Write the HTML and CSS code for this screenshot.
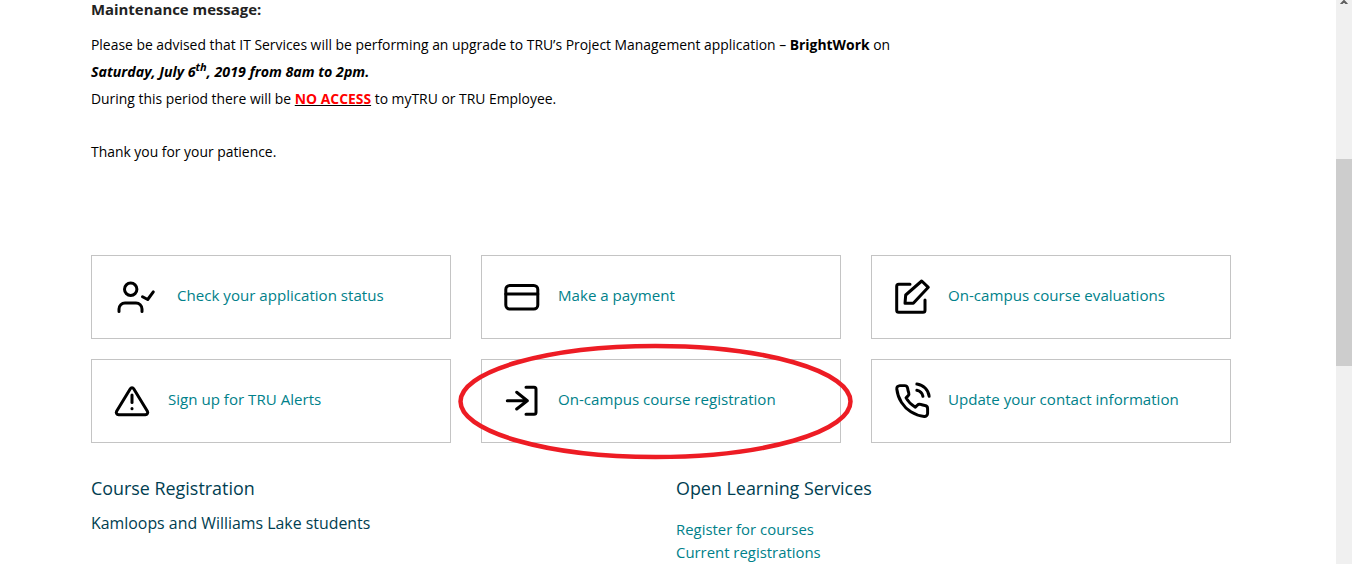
FILE: index.html
```html
<!DOCTYPE html>
<html lang="en">
<head>
    <meta charset="UTF-8">
    <title>Maintenance message</title>
    <link rel="stylesheet" href="styles.css">
</head>
<body>
    <main class="page">
        <section class="notice">
            <h2 class="notice-title">Maintenance message:</h2>
            <p>Please be advised that IT Services will be performing an upgrade to TRU’s Project Management application – <strong>BrightWork</strong> on</p>
            <p><strong><em class="notice-date">Saturday, July 6<sup>th</sup>, 2019 from 8am to 2pm.</em></strong></p>
            <p>During this period there will be <u class="no-access"><strong>NO ACCESS</strong></u> to myTRU or TRU Employee.</p>
            <p class="thanks">Thank you for your patience.</p>
        </section>

        <section class="cards">
            <a class="card" href="#">
                <svg class="icon icon-wide" viewBox="0 0 49 40">
                    <circle cx="17.7" cy="12.3" r="6.2"/>
                    <path d="M6 34.5v-2.5a6 6 0 0 1 6-6h11a6 6 0 0 1 6 6v2.5"/>
                    <path d="M29.5 19.7l5.2 2.8 5.6-7.6"/>
                </svg>
                <span class="card-label">Check your application status</span>
            </a>
            <a class="card" href="#">
                <svg class="icon" viewBox="0 0 40 40">
                    <rect x="2.8" y="8.5" width="32" height="23.5" rx="4"/>
                    <path d="M2.8 17h32"/>
                </svg>
                <span class="card-label">Make a payment</span>
            </a>
            <a class="card" href="#">
                <svg class="icon" viewBox="0 0 40 40">
                    <path d="M17 7.3H5.7a2 2 0 0 0-2 2v24a2 2 0 0 0 2 2H30a2 2 0 0 0 2-2V23"/>
                    <path d="M12 26.3l.7-8.3L28.7 4l6.6 6.3-15 16z"/>
                </svg>
                <span class="card-label">On-campus course evaluations</span>
            </a>
            <a class="card" href="#">
                <svg class="icon" viewBox="0 0 40 40">
                    <path d="M17.3 7.8L3.6 30.2a2.4 2.4 0 0 0 2 3.6h26.8a2.4 2.4 0 0 0 2-3.6L20.7 7.8a2 2 0 0 0-3.4 0z"/>
                    <path d="M19 14v7.5"/>
                    <path d="M19 27.5v.2"/>
                </svg>
                <span class="card-label">Sign up for TRU Alerts</span>
            </a>
            <a class="card" href="#">
                <svg class="icon" viewBox="0 0 40 40">
                    <path d="M4.3 19.7h20M13.7 11.3l10.6 8.4L13.7 28"/>
                    <path d="M23 6.3h8a2 2 0 0 1 2 2v23a2 2 0 0 1-2 2h-8"/>
                </svg>
                <span class="card-label">On-campus course registration</span>
            </a>
            <a class="card" href="#">
                <svg class="icon" viewBox="0 0 40 40">
                    <g transform="translate(.5 1.5) scale(1.55)" stroke-width="1.9">
                        <path d="M15.05 5A5 5 0 0 1 19 8.95M15.05 1A9 9 0 0 1 23 8.94m-1 7.98v3a2 2 0 0 1-2.18 2 19.79 19.79 0 0 1-8.63-3.07 19.5 19.5 0 0 1-6-6 19.79 19.79 0 0 1-3.07-8.67A2 2 0 0 1 4.11 2h3a2 2 0 0 1 2 1.72 12.84 12.84 0 0 0 .7 2.81 2 2 0 0 1-.45 2.11L8.09 9.91a16 16 0 0 0 6 6l1.27-1.27a2 2 0 0 1 2.11-.45 12.84 12.84 0 0 0 2.81.7A2 2 0 0 1 22 16.92z"/>
                    </g>
                </svg>
                <span class="card-label">Update your contact information</span>
            </a>
        </section>

        <section class="services">
            <div>
                <h3>Course Registration</h3>
                <h4>Kamloops and Williams Lake students</h4>
            </div>
            <div>
                <h3>Open Learning Services</h3>
                <ul class="links">
                    <li><a href="#">Register for courses</a></li>
                    <li><a href="#">Current registrations</a></li>
                </ul>
            </div>
        </section>

        <!-- hand drawn circle over the registration card -->
        <svg class="scribble" viewBox="0 0 400 120">
            <ellipse cx="198.5" cy="59.5" rx="195" ry="55.5"/>
        </svg>
    </main>

    <div class="scrollbar">
        <svg class="scroll-arrow" viewBox="0 0 8 4"><path d="M.8 4.5L4 1l3.2 3.5"/></svg>
        <div class="scroll-thumb"></div>
    </div>
</body>
</html>
```

FILE: styles.css
```css
* { box-sizing: border-box; margin: 0; padding: 0; }
html, body { height: 100%; overflow: hidden; }
body { display: flex; background: #fff; color: #000; font-family: "Open Sans", "Noto Sans", sans-serif; font-size: 13.9px; }

.page { position: relative; flex: 1; padding-left: 91px; padding-right: 105px; }

/* notice */
.notice { height: 255px; }
.notice-title { font-size: 14.9px; font-weight: 700; line-height: 18px; color: #222; margin-bottom: 13px; }
.notice p { line-height: 27px; white-space: nowrap; }
.notice strong { font-weight: 700; }
.notice-date { font-size: 14.2px; }
.notice sup { font-size: 11px; line-height: 0; }
.no-access { color: #f00; text-decoration-color: #000; }
.thanks { margin-top: 26px; }

/* link cards */
.cards { display: grid; grid-template-columns: repeat(3, 360px); grid-auto-rows: 84px; gap: 20px 30px; }
.card { display: flex; align-items: center; gap: 15px; padding-left: 21px; border: 1px solid #c4c4c4; color: #00818a; font-size: 15.1px; text-decoration: none; }
.card-label { margin-bottom: 4px; }
.icon { width: 40px; height: 40px; flex: none; fill: none; stroke: #000; stroke-width: 3; stroke-linecap: round; stroke-linejoin: round; }
.icon-wide { width: 49px; }

/* bottom columns */
.services { display: grid; grid-template-columns: 585px 1fr; margin-top: 32px; }
.services h3 { font-size: 17.9px; font-weight: 400; line-height: 26px; color: #003e51; }
.services h4 { font-size: 15.9px; font-weight: 400; line-height: 24px; color: #003e51; margin-top: 10px; }
.links { list-style: none; margin-top: 17px; }
.links li { line-height: 23px; font-size: 14.9px; }
.links a { color: #00818a; text-decoration: none; }

.scribble { position: absolute; left: 457px; top: 342px; width: 400px; height: 120px; fill: none; stroke: #ed1c24; stroke-width: 4.5; }

/* fake scrollbar, page is photographed mid scroll */
.scrollbar { flex: none; width: 16px; background: #f0f0f0; }
.scroll-arrow { display: block; width: 8px; height: 4px; margin-left: 4px; fill: none; stroke: #606060; stroke-width: 2; }
.scroll-thumb { width: 16px; height: 207px; margin-top: 155px; background: #cdcdcd; }
```
